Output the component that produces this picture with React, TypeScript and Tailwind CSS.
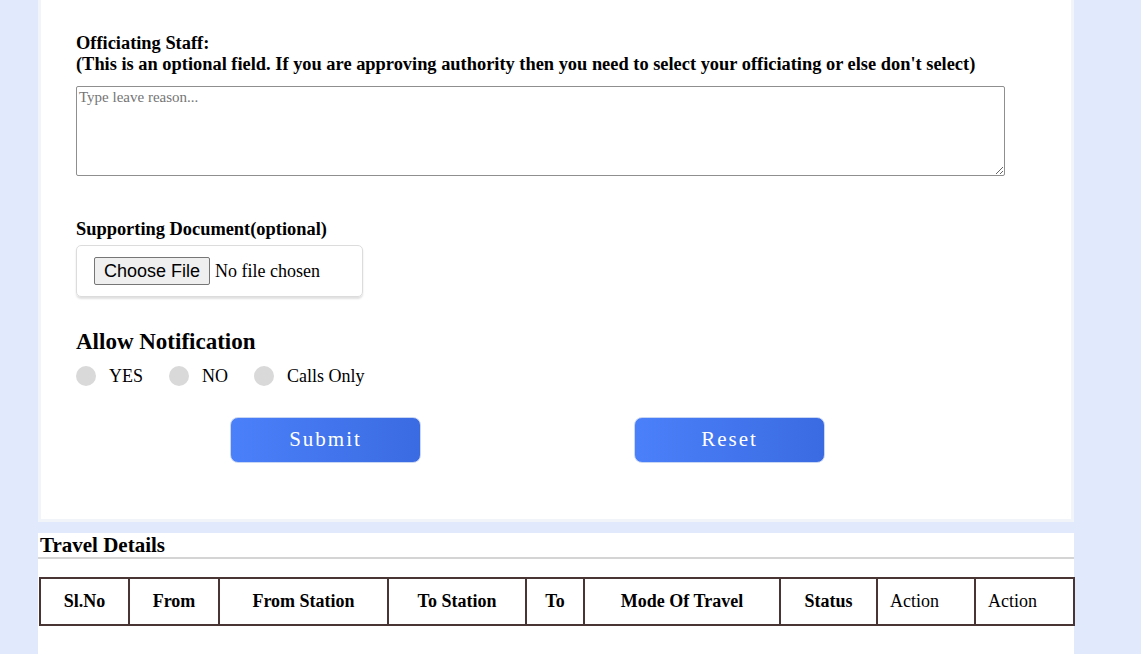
import type React from "react"

const serif = { fontFamily: '"Liberation Serif", "Times New Roman", serif' }

const columns: { label: string; width: string; plain?: boolean }[] = [
  { label: "Sl.No", width: "w-[89px]" },
  { label: "From", width: "w-[90px]" },
  { label: "From Station", width: "w-[169px]" },
  { label: "To Station", width: "w-[138px]" },
  { label: "To", width: "w-[58px]" },
  { label: "Mode Of Travel", width: "w-[196px]" },
  { label: "Status", width: "w-[97px]" },
  { label: "Action", width: "w-[98px]", plain: true },
  { label: "Action", width: "w-[99px]", plain: true },
]

const App: React.FC = () => {
  return (
    <div className="min-h-screen bg-[#e0eafc] text-black" style={serif}>
      <div className="ml-[38px] w-[1036px] bg-white border-x-[3px] border-b-[3px] border-[#f1f4f8] pt-[33px] pb-[56px] pl-[35px]">
        <label className="block text-[18.4px] leading-[21px] font-bold">
          Officiating Staff:
          <br />
          (This is an optional field. If you are approving authority then you need to select your officiating or else don't select)
        </label>
        <textarea
          className="block mt-[11px] w-[929px] h-[90px] px-[2px] py-[1px] text-[15px] leading-[18px] border border-[#8f8f8f] rounded-[2px] placeholder:text-[#757575] outline-none"
          placeholder="Type leave reason..."
        />

        <label className="block mt-[43px] text-[18.4px] leading-[21px] font-bold">Supporting Document(optional)</label>
        <div className="mt-[5px] w-[287px] h-[52px] flex items-center pl-[17px] border border-[#dcdcdc] rounded-[5px] shadow-[0_2px_2px_rgba(0,0,0,0.12)]">
          <span
            className="h-[28px] px-[9px] flex items-center bg-[#efefef] border border-[#767676] rounded-[2px] text-[18px]"
            style={{ fontFamily: '"Liberation Sans", Arial, sans-serif' }}
          >
            Choose File
          </span>
          <span className="ml-[5px] text-[18px]">No file chosen</span>
        </div>

        <h3 className="mt-[32px] text-[23px] leading-[26px] font-bold">Allow Notification</h3>
        <div className="mt-[11px] flex items-center gap-[26px] text-[18px] leading-[20px]">
          {["YES", "NO", "Calls Only"].map((opt) => (
            <label key={opt} className="flex items-center gap-[13px]">
              <input type="radio" name="notify" className="appearance-none w-5 h-5 rounded-full bg-[#d9d9d9]" />
              {opt}
            </label>
          ))}
        </div>

        <div className="mt-[31px] ml-[154px] flex gap-[213px]">
          <button className="w-[191px] h-[46px] rounded-[8px] border border-[#c9d6f3] bg-linear-to-r from-[#4a80fa] to-[#3b6be2] text-white text-[21px] tracking-[2px]">
            Submit
          </button>
          <button className="w-[191px] h-[46px] rounded-[8px] border border-[#c9d6f3] bg-linear-to-r from-[#4a80fa] to-[#3b6be2] text-white text-[21px] tracking-[2px]">
            Reset
          </button>
        </div>
      </div>

      <div className="mt-[11px] ml-[38px] w-[1036px] bg-white pb-[40px]">
        <h2 className="pl-[2px] text-[21px] leading-[24px] font-bold border-b-2 border-[#d4d4d4]">Travel Details</h2>
        <table className="mt-[18px] ml-[1px] w-[1034px] table-fixed border-collapse border-2 border-[#4a3535]">
          <thead>
            <tr className="h-[47px]">
              {columns.map((c, i) => (
                <th
                  key={i}
                  className={`${c.width} border-2 border-[#4a3535] text-[18px] ${c.plain ? "font-normal text-left pl-[12px]" : "font-bold text-center"}`}
                >
                  {c.label}
                </th>
              ))}
            </tr>
          </thead>
        </table>
      </div>
    </div>
  )
}

export default App
